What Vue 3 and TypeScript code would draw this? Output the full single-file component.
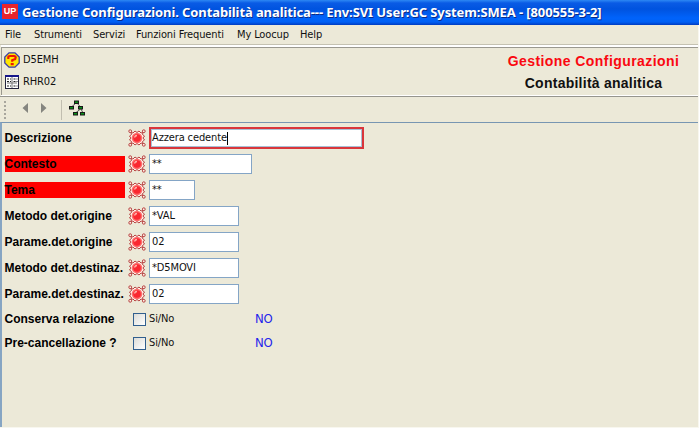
<script setup lang="ts">
interface Field {
  label: string
  value: string
  width: number
  alert?: boolean
  active?: boolean
}

const menus: { text: string; cls: string }[] = [
  { text: 'File', cls: 'm-file' },
  { text: 'Strumenti', cls: 'm-tools' },
  { text: 'Servizi', cls: 'm-services' },
  { text: 'Funzioni Frequenti', cls: 'm-frequent' },
  { text: 'My Loocup', cls: 'm-lookup' },
  { text: 'Help', cls: 'm-help' },
]

const fields: Field[] = [
  { label: 'Descrizione', value: 'Azzera cedente', width: 215, active: true },
  { label: 'Contesto', value: '**', width: 103, alert: true },
  { label: 'Tema', value: '**', width: 46, alert: true },
  { label: 'Metodo det.origine', value: '*VAL', width: 90 },
  { label: 'Parame.det.origine', value: '02', width: 90 },
  { label: 'Metodo det.destinaz.', value: '*D5MOVI', width: 90 },
  { label: 'Parame.det.destinaz.', value: '02', width: 90 },
]

const checks: string[] = ['Conserva relazione', 'Pre-cancellazione ?']
</script>

<template>
  <div class="window">
    <header class="titlebar">
      <span class="logo">UP</span>
      <span class="title">Gestione Configurazioni. Contabilità analitica--- Env:SVI User:GC System:SMEA - [800555-3-2]</span>
    </header>

    <nav class="menubar">
      <span v-for="m in menus" :key="m.text" class="menu" :class="m.cls"><span>{{ m.text }}</span></span>
    </nav>

    <section class="info">
      <div class="codes">
        <div class="code">
          <svg class="code-icon" width="16" height="16" viewBox="0 0 16 16">
            <path d="M5 .8h6L15.2 5v6L11 15.2H5L.8 11V5z" fill="#ffe600" stroke="#3a3aa8" stroke-width="1.3" />
            <path d="M4.300 7V5.300Q4.300 4 6 4h4Q11.700 4 11.700 5.400Q11.700 7 10 7.500L8.200 8.200V9.800" fill="none" stroke="#f01800" stroke-width="2.200" />
            <rect x="6.700" y="11" width="3" height="2.200" fill="#f01800" />
          </svg>
          <span class="code-text">D5EMH</span>
        </div>
        <div class="code">
          <svg class="code-icon" width="16" height="16" viewBox="0 0 16 16">
            <rect x="1.500" y="1.500" width="13" height="13" fill="#fff" stroke="#24243c" />
            <path d="M1 2h14" stroke="#16168a" stroke-width="2" />
            <path d="M8 3v11M3 9h10" stroke="#777" />
            <path d="M3 5h2M6 5h1M9.500 5h2M12.500 5h1M3 7.500h2M6 7.500h1M9.500 7.500h2M12.500 7.500h1M3 12h2M6 12h1M9.500 12h2M12.500 12h1" stroke="#222" stroke-width="1.200" />
          </svg>
          <span class="code-text">RHR02</span>
        </div>
      </div>
      <div class="headings">
        <div class="heading red">Gestione Configurazioni</div>
        <div class="heading sub">Contabilità analitica</div>
      </div>
    </section>

    <div class="toolbar">
      <svg width="100" height="25" viewBox="0 0 100 25">
        <g fill="#a8a69d">
          <rect x="4" y="4" width="2" height="2" /><rect x="4" y="8" width="2" height="2" />
          <rect x="4" y="12" width="2" height="2" /><rect x="4" y="16" width="2" height="2" />
          <rect x="4" y="20" width="2" height="2" />
        </g>
        <path d="M28 6v10L22.500 11zM41 6v10L46.500 11z" fill="#85857f" />
        <path d="M61.500 3v20" stroke="#c1beb0" />
        <path d="M76 6L71.500 10M77 6L80.500 10M80.500 12L75.500 16M81 12L83 16" fill="none" stroke="#555" />
        <g fill="#089018" stroke="#181818">
          <rect x="74.500" y="4" width="4" height="2.500" />
          <rect x="69.500" y="9.500" width="4" height="2.500" />
          <rect x="78.500" y="9.500" width="4" height="2.500" />
          <rect x="73.500" y="15.500" width="4" height="2.500" />
          <rect x="80.500" y="15.500" width="4" height="2.500" />
        </g>
      </svg>
    </div>

    <main class="form">
      <div v-for="f in fields" :key="f.label" class="row">
        <span class="label" :class="{ alert: f.alert }"><span>{{ f.label }}</span></span>
        <svg class="gem" width="18" height="18" viewBox="0 0 18 18">
          <g fill="#fff1e8" stroke="#b03030" stroke-width=".9">
            <path d="M3 3.500L5 4L7 2L9 3.500L11 2L13 4L15 3.500L14.500 5.500L16.500 7L15 9L16.500 11L14.500 12.500L15 14.500L13 14L11 16L9 14.500L7 16L5 14L3 14.500L3.500 12.500L1.500 11L3 9L1.500 7L3.500 5.500z" />
            <circle cx="2.200" cy="2.200" r="1.400" /><circle cx="15.800" cy="2.200" r="1.400" />
            <circle cx="2.200" cy="15.800" r="1.400" /><circle cx="15.800" cy="15.800" r="1.400" />
          </g>
          <circle cx="9" cy="9" r="5.300" fill="#ff6c6c" />
          <circle cx="9" cy="9" r="3.800" fill="#fa2830" />
          <path d="M6.500 8.500Q7 6.500 9 6.500" fill="none" stroke="#ffb0a8" stroke-width="1.300" />
        </svg>
        <span class="input" :class="{ active: f.active }" :style="{ width: f.width + 'px' }">
          <span>{{ f.value }}</span><i v-if="f.active" class="caret"></i>
        </span>
      </div>
      <div v-for="c in checks" :key="c" class="check-row">
        <span class="label"><span>{{ c }}</span></span>
        <span class="box"></span>
        <span class="yesno">Si/No</span>
        <span class="no">NO</span>
      </div>
    </main>
  </div>
</template>

<style>
body {
  margin: 0;
  overflow: hidden;
  background: #ece9d8;
}
</style>

<style scoped>
.window {
  box-sizing: border-box;
  width: 699px;
  height: 428px;
  display: flex;
  flex-direction: column;
  background: #ece9d8;
  border-right: 1px solid #f8f7ef;
  border-bottom: 1px solid #f8f7ef;
  color: #111;
  font: 11px/14px "DejaVu Sans Condensed", "DejaVu Sans", sans-serif;
  font-stretch: condensed;
  letter-spacing: -.13px;
  white-space: nowrap;
}
.window * { box-sizing: border-box; }
.titlebar {
  flex: 0 0 25px;
  display: flex;
  align-items: center;
  margin-right: -1px;
  padding-left: 2px;
  background: linear-gradient(#2d88f4 0, #0a5be5 3px, #0053df 9px, #0063fb 18px, #0060f4 22px, #003bc0 25px);
}
.logo {
  width: 16px;
  height: 15px;
  margin-top: -3px;
  background: #e9242c;
  color: #fff;
  font: bold 9px/14px "Liberation Sans", sans-serif;
  letter-spacing: 0;
  text-align: center;
}
.title {
  margin: -2px 0 0 4px;
  color: #fff;
  font: bold 13px/20px "Noto Sans", sans-serif;
  letter-spacing: -.1px;
  text-shadow: 1px 1px #0a2b88;
}
.menubar {
  flex: 0 0 20px;
  display: flex;
  align-items: center;
  padding-left: 5px;
  border-bottom: 1px solid #c5c2b2;
}
.menu { flex: none; }
.m-file { width: 29px; }
.m-tools { width: 59px; }
.m-services { width: 43px; }
.m-frequent { width: 101px; }
.m-lookup { width: 63px; }
.info {
  flex: 0 0 51px;
  display: flex;
  justify-content: space-between;
  margin-left: 1px;
  border-top: 2px solid #fff;
  border-bottom: 1px solid #fff;
  padding-top: 1px;
  box-shadow: inset 0 1px #9b998f, inset 1px 0 #9b998f;
}
.codes { padding: 1px 0 0 3px; }
.code {
  display: flex;
  align-items: center;
  height: 22px;
}
.code-text { margin-left: 3px; }
.headings {
  width: 209px;
  padding-top: 2px;
  text-align: center;
}
.heading {
  height: 22px;
  font: bold 14px/22px "Liberation Sans", sans-serif;
  letter-spacing: .43px;
}
.sub { letter-spacing: .25px; }
.red { color: #fa0810; }
.toolbar {
  flex: 0 0 26px;
  border-top: 1px solid #96958e;
}
.toolbar svg { display: block; }
.form {
  flex: 1;
  border-top: 1px solid #7896b2;
  border-left: 2px solid #86a5c3;
  padding: 2px 0 0 3px;
}
.row {
  display: flex;
  align-items: center;
  height: 26px;
}
.label {
  width: 120px;
  height: 16px;
  color: #000;
  font: bold 12px/17px "Liberation Sans", sans-serif;
  letter-spacing: 0;
  text-indent: -.5px;
}
.alert { background: #f00; }
.gem { margin-left: 3px; }
.input {
  display: flex;
  align-items: center;
  height: 20px;
  margin-left: 3px;
  padding-left: 2px;
  border: 1px solid #84a5c6;
  background: #fff;
}
.active {
  height: 22px;
  padding-left: 1px;
  border: 2px solid #d9363b;
  box-shadow: inset 0 0 0 1px #a9c0d5;
}
.caret {
  width: 1px;
  height: 13px;
  background: #000;
}
.check-row {
  display: flex;
  align-items: center;
  height: 24px;
}
.box {
  width: 13px;
  height: 13px;
  margin-left: 8px;
  border: 1px solid #315f8e;
  background: linear-gradient(135deg, #dcdcd7, #fff);
}
.yesno { width: 106px; margin-left: 3px; }
.no { color: #2525ec; font-size: 13px; letter-spacing: -.2px; }
</style>
